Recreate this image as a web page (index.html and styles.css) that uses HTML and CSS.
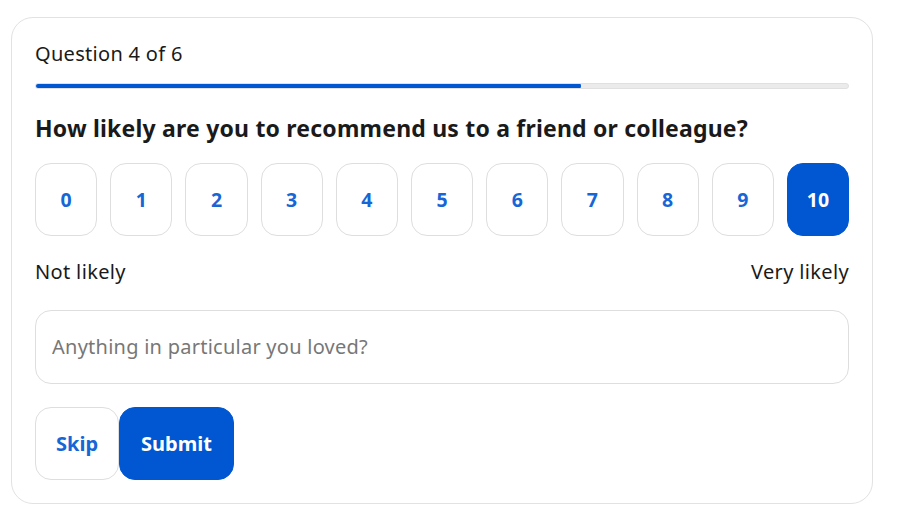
FILE: index.html
```html
<!DOCTYPE html>
<html lang="en">
<head>
<meta charset="utf-8">
<title>Survey</title>
<link rel="stylesheet" href="styles.css">
</head>
<body>
<section class="card">
  <div class="step">Question 4 of 6</div>
  <div class="progress"><div class="progress-fill" style="width: 67.2%"></div></div>
  <h2 class="question">How likely are you to recommend us to a friend or colleague?</h2>
  <div class="scale">
    <button class="score">0</button>
    <button class="score">1</button>
    <button class="score">2</button>
    <button class="score">3</button>
    <button class="score">4</button>
    <button class="score">5</button>
    <button class="score">6</button>
    <button class="score">7</button>
    <button class="score">8</button>
    <button class="score">9</button>
    <button class="score score-selected">10</button>
  </div>
  <div class="scale-labels">
    <span>Not likely</span>
    <span>Very likely</span>
  </div>
  <input class="comment" type="text" placeholder="Anything in particular you loved?">
  <div class="actions">
    <button class="btn btn-skip">Skip</button>
    <button class="btn btn-submit">Submit</button>
  </div>
</section>
</body>
</html>
```

FILE: styles.css
```css
* { box-sizing: border-box; }
html, body { margin: 0; background: #ffffff; }
body {
  padding: 17px 0 0 11px;
  font-family: "Noto Sans", "Open Sans", sans-serif;
  color: #1a1a1a;
}
.card {
  width: 862px;
  height: 487px;
  border: 1px solid #e2e2e2;
  border-radius: 22px;
  padding: 23px;
  display: flex;
  flex-direction: column;
}
.step {
  font-size: 20px;
  line-height: 26px;
  letter-spacing: 0.3px;
  color: #1a1a1a;
}
.progress {
  margin-top: 16px;
  height: 6px;
  background: #ebebeb;
  border: 1px solid #e0e0e0;
  border-radius: 3px;
  overflow: hidden;
}
.progress-fill {
  margin: -1px 0 0 -1px;
  height: 6px;
  background: #0057d1;
  border-radius: 3px;
}
.question {
  margin: 25px 0 0 0;
  font-size: 23px;
  line-height: 28px;
  font-weight: 700;
  letter-spacing: 0.2px;
  color: #1a1a1a;
}
.scale {
  margin-top: 21px;
  display: flex;
  gap: 13px;
}
.score {
  flex: 1;
  height: 73px;
  border: 1px solid #dedede;
  border-radius: 16px;
  background: #fff;
  color: #1766d6;
  font-family: inherit;
  font-size: 19.5px;
  font-weight: 700;
  padding: 0;
}
.score-selected {
  background: #0057d1;
  border-color: #0057d1;
  color: #fff;
}
.scale-labels {
  margin-top: 23px;
  display: flex;
  justify-content: space-between;
  font-size: 20px;
  line-height: 26px;
  letter-spacing: 0.35px;
  color: #1a1a1a;
}
.comment {
  margin-top: 25px;
  height: 75px;
  width: 100%;
  border: 1px solid #dedede;
  border-radius: 16px;
  padding: 0 16px;
  font-family: inherit;
  font-size: 20px;
  letter-spacing: 0.25px;
  color: #1a1a1a;
  outline: none;
}
.comment::placeholder { color: #777777; }
.actions {
  margin-top: 23px;
  display: flex;
}
.btn {
  height: 73px;
  border-radius: 16px;
  font-family: inherit;
  font-size: 20px;
  font-weight: 700;
  padding: 0 21px;
}
.btn-skip {
  background: #fff;
  border: 1px solid #dedede;
  color: #1766d6;
  padding: 0 20px;
}
.btn-submit {
  background: #0057d1;
  border: 1px solid #0057d1;
  color: #fff;
}
```
